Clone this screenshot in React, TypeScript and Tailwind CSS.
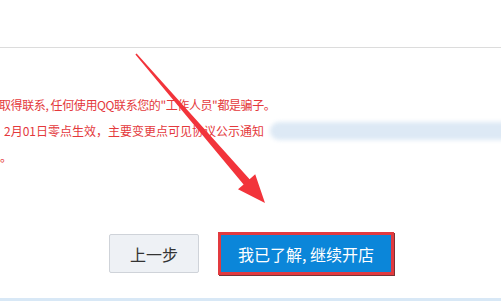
import React from 'react';

const cjk = { fontFamily: '"Microsoft YaHei", "Noto Sans CJK SC", "Noto Sans", sans-serif' };

export default function App() {
  return (
    <div className="relative w-[501px] h-[301px] overflow-hidden bg-white" style={cjk}>
      {/* top area + divider */}
      <div className="h-[48px] border-b border-[#dcdcdc]" />

      {/* notice text */}
      <div className="mt-[44px] text-[12px] leading-[26px] text-[#e4393c] whitespace-nowrap">
        <div className="-ml-[1px] tracking-[-0.4px]">取得联系, 任何使用QQ联系您的"工作人员"都是骗子。</div>
        <div className="flex items-center pl-[4px]">
          <span>2月01日零点生效，主要变更点可见协议公示通知</span>
          <span className="ml-[6px] h-[18px] w-[240px] shrink-0 rounded-l-full bg-[#dde9f5] blur-[2px]" />
        </div>
        <div>。</div>
      </div>

      {/* buttons */}
      <div className="mt-[62px] flex items-center pl-[109px] gap-[19px]">
        <button className="w-[90px] h-[39px] rounded-[2px] border border-[#cfd3d9] bg-[#eef1f5] text-[16px] text-[#333]">
          上一步
        </button>
        <div className="border-[3px] border-[#e23a3f] shadow-[1px_1px_0_#7a3436]">
          <button className="w-[170px] h-[37px] bg-[#0b86d9] text-[16px] text-white">
            我已了解, 继续开店
          </button>
        </div>
      </div>

      <div className="mt-[23px] h-[3px] bg-[#d8e8f6]" />

      {/* annotation arrow */}
      <svg className="absolute inset-0 pointer-events-none" width="501" height="301" viewBox="0 0 501 301">
        <polygon
          fill="#f2343b"
          points="135.4,54.4 136.6,53.6 249.6,179.2 255.2,174.2 265,203 238,189.2 243.6,184.6"
        />
      </svg>
    </div>
  );
}
